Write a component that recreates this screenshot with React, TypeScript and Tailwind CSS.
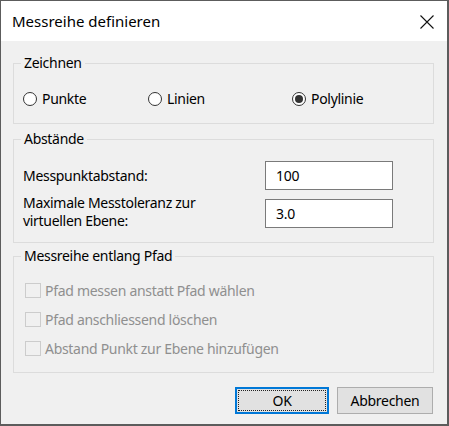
import React from "react";

const font = { fontFamily: '"Noto Sans", "Segoe UI", Arial, sans-serif' };

function Radio({ label, checked, width }: { label: string; checked?: boolean; width: string }) {
  return (
    <div className={`flex items-center gap-[5px] ${width}`}>
      <span className="flex items-center justify-center w-[14px] h-[14px] rounded-full border border-[#333333] bg-white">
        {checked && <span className="w-[8px] h-[8px] rounded-full bg-[#333333]" />}
      </span>
      <span>{label}</span>
    </div>
  );
}

function Check({ label }: { label: string }) {
  return (
    <div className="flex items-center h-[29px] gap-[4px] pl-[11px]">
      <span className="w-[16px] h-[15px] border border-[#cccccc] bg-[#f0f0f0]" />
      <span className="text-[#8f8f8f]">{label}</span>
    </div>
  );
}

export default function App() {
  return (
    <div
      style={font}
      className="w-[449px] h-[426px] flex flex-col border border-r-2 border-b-2 border-[#5c5c5c] bg-white text-[14px] tracking-[-0.3px] text-black leading-[20px]"
    >
      <div className="h-[40px] shrink-0 flex items-center justify-between pl-[11px] pr-[13px] bg-white">
        <span className="text-[15px] tracking-normal">Messreihe definieren</span>
        <svg width="14" height="14" viewBox="0 0 14 14" className="mt-[1px]">
          <path d="M0.5 0.5 L13.5 13.5 M13.5 0.5 L0.5 13.5" stroke="#111" strokeWidth="1.1" />
        </svg>
      </div>

      <div className="flex-1 flex flex-col bg-[#f0f0f0] pl-[12px] pr-[13px]">
        <fieldset className="mt-[12px] border border-[#dcdcdc] p-0">
          <legend className="ml-[7px] px-[3px] leading-[20px]">Zeichnen</legend>
          <div className="flex items-center h-[20px] mt-[16px] mb-[14px] pl-[9px]">
            <Radio label="Punkte" width="w-[125px]" />
            <Radio label="Linien" width="w-[144px]" />
            <Radio label="Polylinie" checked width="w-[120px]" />
          </div>
        </fieldset>

        <fieldset className="mt-[5px] border border-[#dcdcdc] p-0">
          <legend className="ml-[7px] px-[3px] leading-[20px]">Abstände</legend>
          <div className="flex flex-col gap-[9px] pt-[12px] pb-[14px] pl-[9px]">
            <div className="flex items-center h-[29px]">
              <span className="w-[242px]">Messpunktabstand:</span>
              <div className="w-[128px] h-[29px] border border-[#7a7a7a] bg-white flex items-center pl-[10px]">100</div>
            </div>
            <div className="flex items-center h-[29px]">
              <span className="w-[242px] leading-[18px] -mt-[3px]">
                Maximale Messtoleranz zur
                <br />
                virtuellen Ebene:
              </span>
              <div className="w-[128px] h-[29px] shrink-0 border border-[#7a7a7a] bg-white flex items-center pl-[10px]">3.0</div>
            </div>
          </div>
        </fieldset>

        <fieldset className="mt-[3px] border border-[#dcdcdc] p-0">
          <legend className="ml-[7px] px-[3px] leading-[20px]">Messreihe entlang Pfad</legend>
          <div className="flex flex-col pt-[10px] pb-[9px]">
            <Check label="Pfad messen anstatt Pfad wählen" />
            <Check label="Pfad anschliessend löschen" />
            <Check label="Abstand Punkt zur Ebene hinzufügen" />
          </div>
        </fieldset>

        <div className="flex justify-end gap-[8px] mt-[14px] pr-[1px]">
          <button className="w-[94px] h-[27px] border-2 border-[#0078d7] bg-[#e1e1e1] p-[1px]">
            <span className="flex items-center justify-center w-full h-full border border-dotted border-[#222]">OK</span>
          </button>
          <button className="w-[96px] h-[27px] border border-[#adadad] bg-[#e1e1e1]">Abbrechen</button>
        </div>
      </div>
    </div>
  );
}
